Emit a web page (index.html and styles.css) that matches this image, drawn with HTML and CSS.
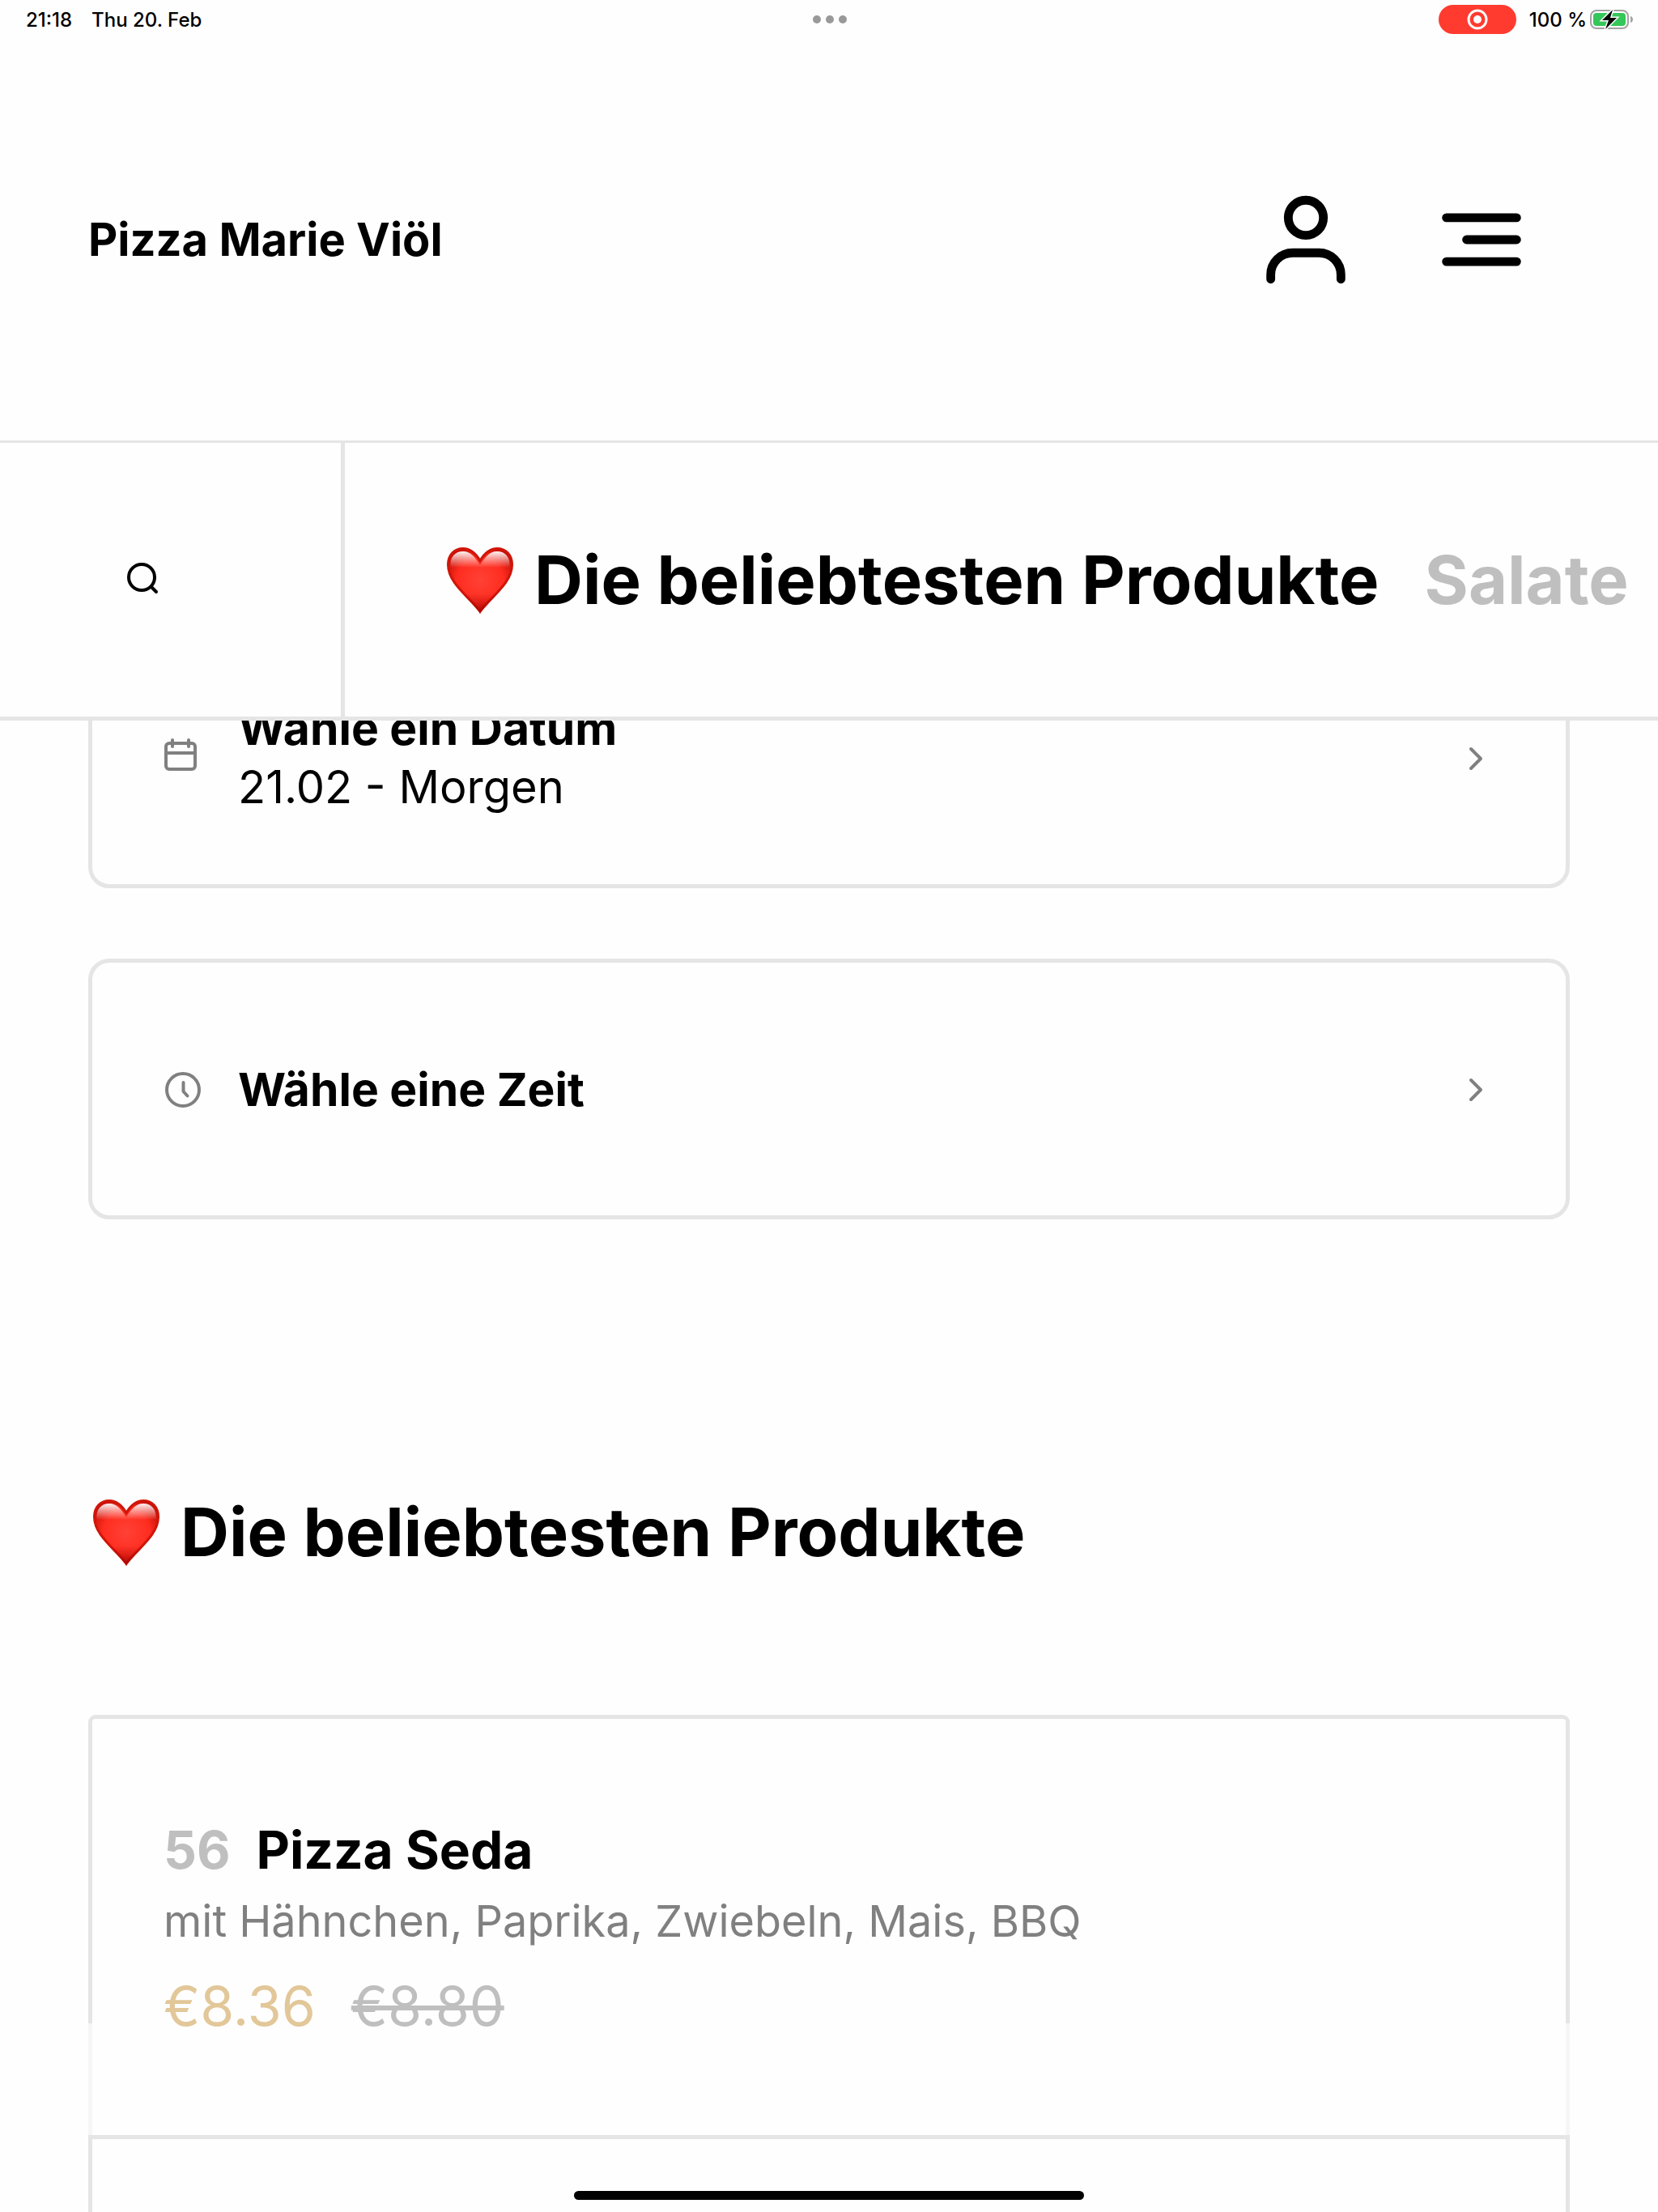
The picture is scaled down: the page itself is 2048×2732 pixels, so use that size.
FILE: index.html
```
<!DOCTYPE html>
<html lang="de">

  <head>
    <meta charset="UTF-8">
    <title>Pizza Marie Viöl</title>
    <meta name="viewport" content="width=device-width, initial-scale=1">
    <link rel="stylesheet" href="styles.css">
  </head>

  <body>
    <!-- heart symbol, used in the nav and in the heading -->
    <svg class="defs" width="0" height="0" aria-hidden="true">
      <defs>
        <radialGradient id="heartFill" cx="0.5" cy="0.5" r="0.6">
          <stop offset="0" stop-color="#ff4136" />
          <stop offset="0.6" stop-color="#ff2d20" />
          <stop offset="1" stop-color="#c00d04" />
        </radialGradient>
        <linearGradient id="heartShine" x1="0" y1="0" x2="0" y2="1">
          <stop offset="0" stop-color="#fff" stop-opacity="0.95" />
          <stop offset="1" stop-color="#fff" stop-opacity="0" />
        </linearGradient>
        <linearGradient id="heartTip" x1="0" y1="0" x2="0" y2="1">
          <stop offset="0.6" stop-color="#900" stop-opacity="0" />
          <stop offset="1" stop-color="#900" stop-opacity="0.7" />
        </linearGradient>
      </defs>
      <symbol id="heart" viewBox="0 0 90 90">
        <path fill="url(#heartFill)" stroke="#d01509" stroke-width="3" d="M47 84.500C35 67 7.500 50 7.500 26.500C7.500 14 15.500 6.500 26 6.500C35.500 6.500 42 13 47 21.500C52 13 58.500 6.500 68 6.500C78.500 6.500 86.500 14 86.500 26.500C86.500 50 59 67 47 84.500Z" />
        <path fill="url(#heartTip)" d="M47 86C35 68 6 50 6 26.500H88C88 50 59 68 47 86Z" />
        <path fill="url(#heartShine)" d="M10.500 30C9 17 16 10 26 10C35 10 41 17 47 27C53 17 59 10 68 10C78 10 85 17 83.500 30Z" />
      </symbol>
    </svg>

    <div class="screen">
      <div class="status">
        <div class="status-left">
          <span>21:18</span>
          <span>Thu 20. Feb</span>
        </div>
        <svg class="dots" viewBox="0 0 42 10" aria-hidden="true">
          <circle cx="5" cy="5" r="5" />
          <circle cx="21" cy="5" r="5" />
          <circle cx="37" cy="5" r="5" />
        </svg>
        <div class="status-right">
          <span class="recording">
            <svg width="26" height="26" viewBox="0 0 26 26" aria-hidden="true">
              <circle cx="13" cy="13" r="11" fill="none" stroke="#fff" stroke-width="3" />
              <circle cx="13" cy="13" r="5" fill="#fff" />
            </svg>
          </span>
          <span class="percent">100 %</span>
          <svg width="54" height="26" viewBox="0 0 54 26" aria-hidden="true">
            <rect x="1" y="2" width="46" height="22" rx="7" fill="none" stroke="#a3a3a3" stroke-width="2" />
            <rect x="4" y="5" width="40" height="16" rx="4" fill="#35c759" />
            <path d="M50 9c4 1 4 7 0 8z" fill="#a3a3a3" />
            <path d="M28 1L15 14h8l-4 11L33 11h-8z" fill="#000" stroke="#fff" stroke-width="3" paint-order="stroke" />
          </svg>
        </div>
      </div>

      <header class="header">
        <a class="brand" href="#">Pizza Marie Viöl</a>
        <div class="actions">
          <button class="icon-button" type="button" aria-label="Konto">
            <svg viewBox="0 0 24 24">
              <circle cx="12" cy="7" r="4" />
              <path d="M4 21v-1a5 5 0 0 1 5-5h6a5 5 0 0 1 5 5v1" />
            </svg>
          </button>
          <button class="icon-button" type="button" aria-label="Menü">
            <svg viewBox="0 0 24 24">
              <path d="M4 7h16M8.600 12H20M4 17h16" />
            </svg>
          </button>
        </div>
      </header>

      <nav class="nav">
        <button class="search" type="button" aria-label="Suche">
          <svg width="48" height="48" viewBox="0 0 48 48">
            <circle cx="24" cy="21" r="16" />
            <path d="M36 33l6 6" />
          </svg>
        </button>
        <div class="categories">
          <a class="category active" href="#beliebt"><svg class="heart" aria-hidden="true"><use href="#heart" /></svg>Die beliebtesten Produkte</a>
          <a class="category" href="#salate">Salate</a>
        </div>
      </nav>

      <main class="content">
        <div class="pickers">
          <button class="picker" type="button">
            <svg class="picker-icon" viewBox="0 0 48 48">
              <rect x="3" y="6" width="36" height="32" rx="4" />
              <path d="M3 18h36M11 2v8M31 2v8" />
            </svg>
            <span class="picker-text">
              <strong>Wähle ein Datum</strong>
              <span class="picker-value">21.02 - Morgen</span>
            </span>
            <svg class="picker-icon" viewBox="0 0 48 48"><path d="M19 13l12 12-12 12" /></svg>
          </button>
          <button class="picker" type="button">
            <svg class="picker-icon" viewBox="0 0 48 48">
              <circle cx="24" cy="25" r="20" />
              <path d="M24.500 16v11l5 5.500" />
            </svg>
            <span class="picker-text">
              <strong>Wähle eine Zeit</strong>
            </span>
            <svg class="picker-icon" viewBox="0 0 48 48"><path d="M19 13l12 12-12 12" /></svg>
          </button>
        </div>

        <h2 class="heading" id="beliebt"><svg class="heart" aria-hidden="true"><use href="#heart" /></svg>Die beliebtesten Produkte</h2>

        <div class="products">
          <article class="product faded">
            <h3 class="product-title"><span class="number">56</span>Pizza Seda</h3>
            <p class="description">mit Hähnchen, Paprika, Zwiebeln, Mais, BBQ</p>
            <p class="prices"><span class="price">€8.36</span><s class="old-price">€8.80</s></p>
          </article>
          <article class="product"></article>
        </div>
      </main>
    </div>

    <div class="home-bar"></div>
  </body>

</html>
```
FILE: styles.css
```
* {
  box-sizing: border-box;
}

body {
  margin: 0;
  background: #fefefe;
  color: #000;
  font-family: Inter, "Liberation Sans", sans-serif;
  font-size: 56px;
}

button {
  background: none;
  border: 0;
  padding: 0;
  color: inherit;
  font: inherit;
}

a {
  color: inherit;
  text-decoration: none;
}

svg {
  display: block;
  flex-shrink: 0;
}

.defs {
  position: absolute;
}

.screen {
  height: 100vh;
  overflow: hidden;
}

/* status bar */

.status {
  display: grid;
  grid-template-columns: 1fr auto 1fr;
  align-items: center;
  height: 48px;
  padding: 0 30px 0 32px;
  font-size: 24px;
  font-weight: 500;
}

.status-left {
  display: flex;
  gap: 24px;
}

.dots {
  width: 42px;
  height: 10px;
  fill: #999;
}

.status-right {
  display: flex;
  align-items: center;
  justify-content: flex-end;
}

.recording {
  display: flex;
  align-items: center;
  justify-content: center;
  width: 96px;
  height: 36px;
  margin-right: 16px;
  border-radius: 18px;
  background: #ff3b30;
}

.percent {
  margin-right: 4px;
}

/* header */

.header {
  display: flex;
  align-items: center;
  justify-content: space-between;
  height: 499px;
  padding: 0 153px 0 109px;
  border-bottom: 3px solid #e5e5e5;
}

.brand {
  font-weight: 700;
}

.actions {
  display: flex;
  gap: 87px;
}

.icon-button svg {
  width: 130px;
  height: 130px;
  fill: none;
  stroke: #000;
  stroke-width: 2;
  stroke-linecap: round;
  stroke-linejoin: round;
}

/* category nav, stays above the content */

.nav {
  position: relative;
  z-index: 1;
  display: flex;
  height: 343px;
  border-bottom: 5px solid #e5e5e5;
  background: #fefefe;
}

.search {
  flex-shrink: 0;
  width: 426px;
  padding-left: 151px;
  border-right: 5px solid #e5e5e5;
}

.search svg {
  fill: none;
  stroke: #000;
  stroke-width: 4;
  stroke-linecap: round;
}

.categories {
  display: flex;
  align-items: center;
  gap: 56px;
  padding-left: 120px;
  overflow: hidden;
  white-space: nowrap;
}

.category,
.heading {
  display: flex;
  align-items: center;
  gap: 24px;
  font-size: 83px;
  font-weight: 700;
  line-height: 100px;
}

.category {
  color: #bfbfbf;
}

.category.active {
  color: #000;
}

.heart {
  width: 90px;
  height: 90px;
}

/* content */

.content {
  margin-top: -115px;
  padding: 0 109px;
}

.pickers {
  display: flex;
  flex-direction: column;
  gap: 87px;
}

.picker {
  display: flex;
  align-items: center;
  gap: 44px;
  min-height: 322px;
  padding: 0 88px;
  border: 5px solid #e5e5e5;
  border-radius: 26px;
  line-height: 73px;
  text-align: left;
}

.picker-icon {
  width: 48px;
  height: 48px;
  fill: none;
  stroke: #808080;
  stroke-width: 4;
  stroke-linecap: round;
  stroke-linejoin: round;
}

.picker-text {
  display: flex;
  flex: 1;
  flex-direction: column;
}

.picker-text strong {
  font-size: 57px;
  font-weight: 700;
}

.picker-value {
  font-size: 56px;
}

.heading {
  margin: 336px 0 176px;
}

.product {
  position: relative;
  min-height: 322px;
  padding: 118px 88px 116px;
  border: 5px solid #e5e5e5;
  border-bottom: 0;
}

.product:first-child {
  border-radius: 9px 9px 0 0;
}

.faded::after {
  content: "";
  position: absolute;
  right: -5px;
  bottom: 0;
  left: -5px;
  height: 138px;
  background: rgba(254, 254, 254, 0.7);
  pointer-events: none;
}

.product-title {
  display: flex;
  gap: 32px;
  margin: 0;
  font-size: 64px;
  font-weight: 700;
  line-height: 88px;
}

.number {
  color: #bfbfbf;
}

.description {
  margin: 0;
  color: #808080;
  font-size: 54px;
  line-height: 88px;
}

/* keeps the prices above the fade */
.prices {
  position: relative;
  z-index: 1;
  display: flex;
  gap: 44px;
  margin: 16px 0 0;
  font-size: 68px;
  line-height: 88px;
}

.price {
  color: #e2c799;
}

.old-price {
  color: #bfbfbf;
}

.home-bar {
  position: fixed;
  bottom: 15px;
  left: 50%;
  width: 630px;
  height: 11px;
  margin-left: -315px;
  border-radius: 6px;
  background: #000;
}
```
